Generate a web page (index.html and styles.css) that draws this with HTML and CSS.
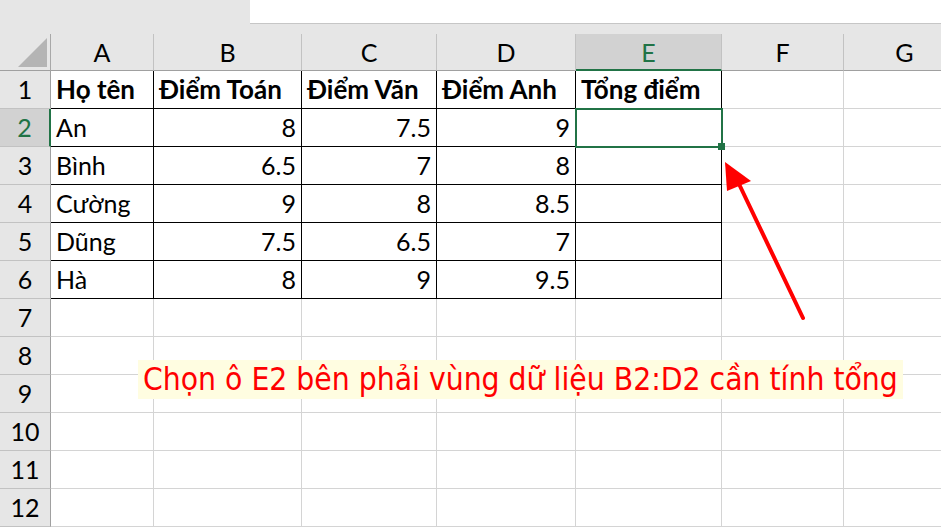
FILE: index.html
```html
<!DOCTYPE html>
<html lang="vi">
<head>
<meta charset="utf-8">
<title>Excel</title>
<link rel="stylesheet" href="styles.css">
</head>
<body>
<div class="app">
  <div class="topbar">
    <div class="namearea"></div>
    <div class="formulabar"></div>
  </div>
  <div class="sheet">
    <div class="corner"><svg width="50" height="36" viewBox="0 0 50 36"><polygon points="18,33 47,4 47,33" fill="#b4b4b4"/></svg></div>
    <div class="hd">A</div>
    <div class="hd">B</div>
    <div class="hd">C</div>
    <div class="hd">D</div>
    <div class="hd hsel">E</div>
    <div class="hd">F</div>
    <div class="hd">G</div>

    <div class="rh">1</div>
    <div class="c t b">Họ tên</div>
    <div class="c t b">Điểm Toán</div>
    <div class="c t b">Điểm Văn</div>
    <div class="c t b">Điểm Anh</div>
    <div class="c t b">Tổng điểm</div>
    <div class="c"></div>
    <div class="c"></div>

    <div class="rh rsel">2</div>
    <div class="c t">An</div>
    <div class="c t n">8</div>
    <div class="c t n">7.5</div>
    <div class="c t n">9</div>
    <div class="c t active"></div>
    <div class="c"></div>
    <div class="c"></div>

    <div class="rh">3</div>
    <div class="c t">Bình</div>
    <div class="c t n">6.5</div>
    <div class="c t n">7</div>
    <div class="c t n">8</div>
    <div class="c t"></div>
    <div class="c"></div>
    <div class="c"></div>

    <div class="rh">4</div>
    <div class="c t">Cường</div>
    <div class="c t n">9</div>
    <div class="c t n">8</div>
    <div class="c t n">8.5</div>
    <div class="c t"></div>
    <div class="c"></div>
    <div class="c"></div>

    <div class="rh">5</div>
    <div class="c t">Dũng</div>
    <div class="c t n">7.5</div>
    <div class="c t n">6.5</div>
    <div class="c t n">7</div>
    <div class="c t"></div>
    <div class="c"></div>
    <div class="c"></div>

    <div class="rh">6</div>
    <div class="c t">Hà</div>
    <div class="c t n">8</div>
    <div class="c t n">9</div>
    <div class="c t n">9.5</div>
    <div class="c t"></div>
    <div class="c"></div>
    <div class="c"></div>

    <div class="rh">7</div>
    <div class="c"></div><div class="c"></div><div class="c"></div><div class="c"></div><div class="c"></div><div class="c"></div><div class="c"></div>
    <div class="rh">8</div>
    <div class="c"></div><div class="c"></div><div class="c"></div><div class="c"></div><div class="c"></div><div class="c"></div><div class="c"></div>
    <div class="rh">9</div>
    <div class="c"></div><div class="c"></div><div class="c"></div><div class="c"></div><div class="c"></div><div class="c"></div><div class="c"></div>
    <div class="rh">10</div>
    <div class="c"></div><div class="c"></div><div class="c"></div><div class="c"></div><div class="c"></div><div class="c"></div><div class="c"></div>
    <div class="rh">11</div>
    <div class="c"></div><div class="c"></div><div class="c"></div><div class="c"></div><div class="c"></div><div class="c"></div><div class="c"></div>
    <div class="rh">12</div>
    <div class="c"></div><div class="c"></div><div class="c"></div><div class="c"></div><div class="c"></div><div class="c"></div><div class="c"></div>
  </div>

  <div class="note">Chọn ô E2 bên phải vùng dữ liệu B2:D2 cần tính tổng</div>
  <svg class="arrow" width="941" height="527" viewBox="0 0 941 527">
    <line x1="803" y1="318" x2="739" y2="184" stroke="#ff0000" stroke-width="4" stroke-linecap="round"/>
    <polygon points="725,162 751,181 727,191" fill="#ff0000"/>
  </svg>
</div>
</body>
</html>
```

FILE: styles.css
```css
* { box-sizing: border-box; }
html, body { margin: 0; padding: 0; }
body {
  width: 941px;
  height: 527px;
  overflow: hidden;
  background: #e6e6e6;
  font-family: Lato, "Open Sans", sans-serif;
}
.app {
  position: relative;
  width: 941px;
  height: 527px;
  overflow: hidden;
}
.topbar {
  display: flex;
  height: 24px;
  margin-bottom: 10px;
}
.namearea {
  width: 250px;
  background: #e6e6e6;
}
.formulabar {
  flex: 1;
  background: #ffffff;
  border-bottom: 1px solid #c6c6c6;
}
.sheet {
  display: grid;
  grid-template-columns: 51px 103px 148px 135px 139px 146px 122px 122px;
  grid-template-rows: 37px repeat(12, 38px);
  font-size: 25px;
  line-height: 30px;
  color: #000;
}
.corner {
  background: #e6e6e6;
  border-right: 1px solid #a8a8a8;
  border-bottom: 1px solid #a0a0a0;
}
.corner svg { display: block; }
.hd {
  background: #e6e6e6;
  border-right: 1px solid #c2c2c2;
  border-bottom: 1px solid #a0a0a0;
  display: flex;
  align-items: flex-end;
  justify-content: center;
  padding-bottom: 3px;
}
.hd.hsel {
  background: #d2d2d2;
  color: #217346;
  border-bottom: 2px solid #217346;
  padding-bottom: 2px;
}
.rh {
  background: #e6e6e6;
  border-right: 1px solid #a0a0a0;
  border-bottom: 1px solid #c2c2c2;
  display: flex;
  align-items: flex-end;
  justify-content: center;
  padding-bottom: 4px;
}
.rh.rsel {
  background: #d2d2d2;
  color: #217346;
  border-right: 2px solid #217346;
}
.c {
  background: #ffffff;
  border-right: 1px solid #d4d4d4;
  border-bottom: 1px solid #d4d4d4;
  display: flex;
  align-items: flex-end;
  padding: 0 5px 4px 5px;
  white-space: nowrap;
}
.c.t {
  border-right-color: #000;
  border-bottom-color: #000;
}
.c.b {
  font-weight: 700;
  font-size: 26px;
}
.c.n { justify-content: flex-end; }
.c.active {
  position: relative;
  z-index: 2;
  outline: 2px solid #217346;
  outline-offset: -1px;
}
.c.active::after {
  content: "";
  position: absolute;
  right: -4px;
  bottom: -4px;
  width: 7px;
  height: 7px;
  background: #217346;
}
.note {
  position: absolute;
  left: 138px;
  top: 360px;
  width: 765px;
  height: 39px;
  background: #fffde1;
  color: #ff0000;
  font-family: "DejaVu Sans Condensed", "DejaVu Sans", sans-serif;
  font-stretch: condensed;
  font-size: 31.5px;
  line-height: 39px;
  padding-left: 5px;
  white-space: nowrap;
  z-index: 3;
}
.arrow {
  position: absolute;
  left: 0;
  top: 0;
  z-index: 4;
  pointer-events: none;
}
```
